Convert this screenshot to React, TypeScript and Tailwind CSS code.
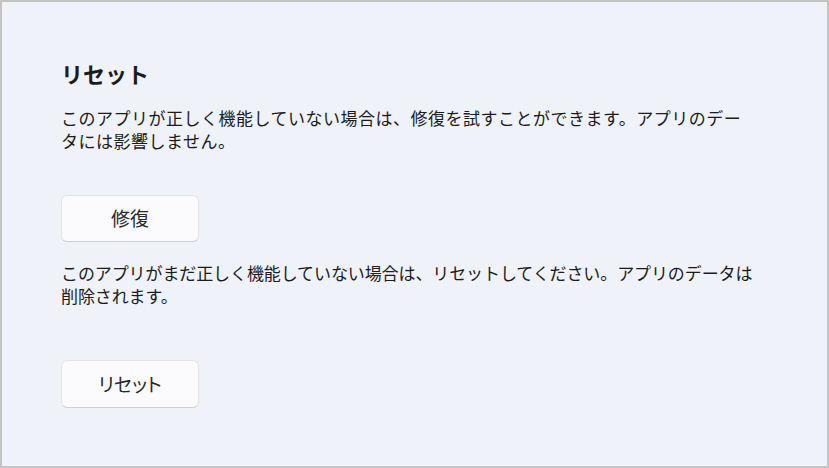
export default function App() {
  const jp = { fontFamily: '"Noto Sans CJK JP", "Noto Sans", sans-serif' };
  const prop = { fontFeatureSettings: '"palt"' };
  return (
    <div
      className="h-[468px] w-[829px] overflow-hidden border-2 border-[#c4c4c4] bg-[#eff2f8] text-[#1b1b1b]"
      style={jp}
    >
      <div className="flex flex-col items-start pl-[59px] pt-[54px]">
        <h1 className="text-[22px] font-bold leading-[34px]">リセット</h1>
        <p className="mt-[16px] text-[17px] leading-[23px] tracking-[0.5px]">
          このアプリが正しく機能していない場合は、修復を試すことができます。アプリのデー
          <br />
          タには影響しません。
        </p>
        <button
          className="mt-[43px] flex h-[47px] w-[138px] items-center justify-center rounded-[6px] border border-[#e3e4e8] border-b-[#cfd0d4] bg-[#fbfbfd] text-[19px] text-[#2a2a2a]"
          style={prop}
        >
          修復
        </button>
        <p className="mt-[19px] text-[17px] leading-[23px] tracking-[-0.1px]">
          このアプリがまだ正しく機能していない場合は、リセットしてください。アプリのデータは
          <br />
          削除されます。
        </p>
        <button
          className="mt-[53px] flex h-[48px] w-[138px] items-center justify-center rounded-[6px] border border-[#e3e4e8] border-b-[#cfd0d4] bg-[#fbfbfd] text-[19px] text-[#2a2a2a]"
          style={prop}
        >
          リセット
        </button>
      </div>
    </div>
  );
}
